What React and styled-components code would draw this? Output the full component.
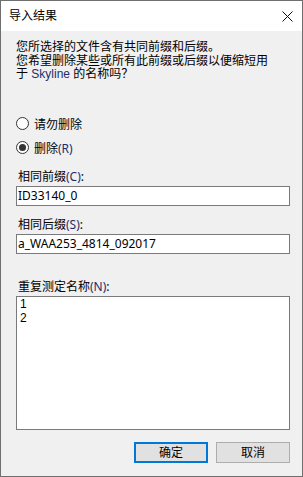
import React from "react";
import styled, { createGlobalStyle } from "styled-components";

const Global = createGlobalStyle`
  html, body { margin: 0; padding: 0; background: #f0f0f0; }
  body {
    font-family: "Noto Sans", "Noto Sans CJK SC", sans-serif;
    font-size: 12px;
    color: #000;
  }
  * { box-sizing: border-box; }
`;

const Window = styled.div`
  width: 303px;
  height: 477px;
  border: 1px solid #6f6f6f;
  display: flex;
  flex-direction: column;
  background: #f0f0f0;
`;

const TitleBar = styled.div`
  flex: none;
  height: 30px;
  background: #fff;
  display: flex;
  align-items: center;
  justify-content: space-between;
  padding: 0 9px 0 8px;
`;

const Title = styled.span`
  line-height: 14px;
`;

const CloseIcon = styled.svg`
  width: 11px;
  height: 11px;
  display: block;
`;

const Body = styled.div`
  flex: 1;
  display: flex;
  flex-direction: column;
  padding: 10px 12px 13px 15px;
`;

const Message = styled.div`
  font-family: "Liberation Sans", "Noto Sans CJK SC", sans-serif;
  line-height: 13.5px;
  white-space: nowrap;
`;

const MessageLine = styled.div`
  height: 13.5px;
`;

const Accent = styled.span`
  color: #1d2d6a;
`;

const RadioGroup = styled.div`
  margin-top: 34px;
  display: flex;
  flex-direction: column;
  gap: 8px;
`;

const RadioRow = styled.label`
  display: flex;
  align-items: center;
  height: 16px;
  gap: 5px;
`;

const RadioCircle = styled.span`
  width: 13px;
  height: 13px;
  border-radius: 50%;
  border: 1px solid #333;
  background: #fff;
  display: flex;
  align-items: center;
  justify-content: center;
  &::after {
    content: "";
    width: 7px;
    height: 7px;
    border-radius: 50%;
    background: ${(p) => (p.$checked ? "#333" : "transparent")};
  }
`;

const FieldLabel = styled.div`
  margin-top: ${(p) => p.$gap}px;
  margin-left: 2px;
  height: 14px;
  line-height: 14px;
`;

const TextBox = styled.div`
  margin-top: 2px;
  height: 20px;
  border: 1px solid #7a7a7a;
  background: #fff;
  padding: 0 1px;
  line-height: 18px;
  white-space: nowrap;
`;

const ListBox = styled.div`
  margin-top: 2px;
  height: 134px;
  border: 1px solid #7a7a7a;
  background: #fff;
  padding: 0 3px;
  font-family: "Liberation Sans", "Noto Sans CJK SC", sans-serif;
`;

const ListItem = styled.div`
  line-height: 14px;
  height: 14px;
`;

const ButtonRow = styled.div`
  margin-top: auto;
  display: flex;
  justify-content: flex-end;
  gap: 8px;
`;

const Button = styled.button`
  width: 74px;
  height: 21px;
  padding: 0;
  font: inherit;
  color: #000;
  background: #e1e1e1;
  border: ${(p) => (p.$primary ? "2px solid #0078d7" : "1px solid #adadad")};
  line-height: 14px;
`;

export default function App() {
  return (
    <>
      <Global />
      <Window>
        <TitleBar>
          <Title>导入结果</Title>
          <CloseIcon viewBox="0 0 11 11">
            <path d="M0.5 0.5 L10.5 10.5 M10.5 0.5 L0.5 10.5" stroke="#111" strokeWidth="1" fill="none" />
          </CloseIcon>
        </TitleBar>
        <Body>
          <Message>
            <MessageLine>您所选择的文件含有共同前缀和后缀。</MessageLine>
            <MessageLine>您希望删除某些或所有此前缀或后缀以便缩短用</MessageLine>
            <MessageLine>
              于 <Accent>Skyline</Accent> 的名称吗？
            </MessageLine>
          </Message>
          <RadioGroup>
            <RadioRow>
              <RadioCircle />
              <span>请勿删除</span>
            </RadioRow>
            <RadioRow>
              <RadioCircle $checked />
              <span>
                删除<Accent>(R)</Accent>
              </span>
            </RadioRow>
          </RadioGroup>
          <FieldLabel $gap={14}>
            相同前缀<Accent>(C)</Accent>:
          </FieldLabel>
          <TextBox>ID33140_0</TextBox>
          <FieldLabel $gap={12}>
            相同后缀<Accent>(S)</Accent>:
          </FieldLabel>
          <TextBox>a_WAA253_4814_092017</TextBox>
          <FieldLabel $gap={26}>
            重复测定名称<Accent>(N)</Accent>:
          </FieldLabel>
          <ListBox>
            <ListItem>1</ListItem>
            <ListItem>2</ListItem>
          </ListBox>
          <ButtonRow>
            <Button $primary>确定</Button>
            <Button>取消</Button>
          </ButtonRow>
        </Body>
      </Window>
    </>
  );
}
